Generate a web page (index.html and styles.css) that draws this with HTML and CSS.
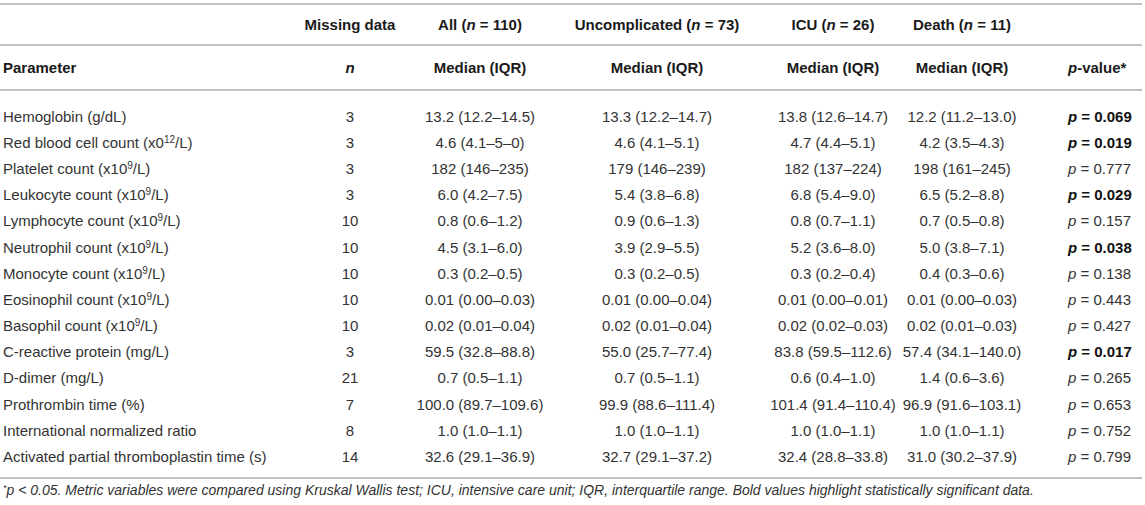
FILE: index.html
```html
<!DOCTYPE html>
<html>
<head>
<meta charset="utf-8">
<link rel="stylesheet" href="styles.css">
</head>
<body>
<div class="wrap">
<table class="data">
  <colgroup>
    <col class="c1"><col class="c2"><col class="c3"><col class="c4"><col class="c5"><col class="c6"><col class="c7">
  </colgroup>
  <thead>
    <tr class="h1">
      <th class="left"></th>
      <th>Missing data</th>
      <th>All (<i>n</i> = 110)</th>
      <th>Uncomplicated (<i>n</i> = 73)</th>
      <th>ICU (<i>n</i> = 26)</th>
      <th>Death (<i>n</i> = 11)</th>
      <th class="pv"></th>
    </tr>
    <tr class="h2">
      <th class="left">Parameter</th>
      <th><i>n</i></th>
      <th>Median (IQR)</th>
      <th>Median (IQR)</th>
      <th>Median (IQR)</th>
      <th>Median (IQR)</th>
      <th class="pv"><i>p</i>-value*</th>
    </tr>
  </thead>
  <tbody>
    <tr class="first"><td class="left">Hemoglobin (g/dL)</td><td>3</td><td>13.2 (12.2–14.5)</td><td>13.3 (12.2–14.7)</td><td>13.8 (12.6–14.7)</td><td>12.2 (11.2–13.0)</td><td class="pv"><b><i>p</i> = 0.069</b></td></tr>
    <tr><td class="left">Red blood cell count (x0<sup>12</sup>/L)</td><td>3</td><td>4.6 (4.1–5–0)</td><td>4.6 (4.1–5.1)</td><td>4.7 (4.4–5.1)</td><td>4.2 (3.5–4.3)</td><td class="pv"><b><i>p</i> = 0.019</b></td></tr>
    <tr><td class="left">Platelet count (x10<sup>9</sup>/L)</td><td>3</td><td>182 (146–235)</td><td>179 (146–239)</td><td>182 (137–224)</td><td>198 (161–245)</td><td class="pv"><i>p</i> = 0.777</td></tr>
    <tr><td class="left">Leukocyte count (x10<sup>9</sup>/L)</td><td>3</td><td>6.0 (4.2–7.5)</td><td>5.4 (3.8–6.8)</td><td>6.8 (5.4–9.0)</td><td>6.5 (5.2–8.8)</td><td class="pv"><b><i>p</i> = 0.029</b></td></tr>
    <tr><td class="left">Lymphocyte count (x10<sup>9</sup>/L)</td><td>10</td><td>0.8 (0.6–1.2)</td><td>0.9 (0.6–1.3)</td><td>0.8 (0.7–1.1)</td><td>0.7 (0.5–0.8)</td><td class="pv"><i>p</i> = 0.157</td></tr>
    <tr><td class="left">Neutrophil count (x10<sup>9</sup>/L)</td><td>10</td><td>4.5 (3.1–6.0)</td><td>3.9 (2.9–5.5)</td><td>5.2 (3.6–8.0)</td><td>5.0 (3.8–7.1)</td><td class="pv"><b><i>p</i> = 0.038</b></td></tr>
    <tr><td class="left">Monocyte count (x10<sup>9</sup>/L)</td><td>10</td><td>0.3 (0.2–0.5)</td><td>0.3 (0.2–0.5)</td><td>0.3 (0.2–0.4)</td><td>0.4 (0.3–0.6)</td><td class="pv"><i>p</i> = 0.138</td></tr>
    <tr><td class="left">Eosinophil count (x10<sup>9</sup>/L)</td><td>10</td><td>0.01 (0.00–0.03)</td><td>0.01 (0.00–0.04)</td><td>0.01 (0.00–0.01)</td><td>0.01 (0.00–0.03)</td><td class="pv"><i>p</i> = 0.443</td></tr>
    <tr><td class="left">Basophil count (x10<sup>9</sup>/L)</td><td>10</td><td>0.02 (0.01–0.04)</td><td>0.02 (0.01–0.04)</td><td>0.02 (0.02–0.03)</td><td>0.02 (0.01–0.03)</td><td class="pv"><i>p</i> = 0.427</td></tr>
    <tr><td class="left">C-reactive protein (mg/L)</td><td>3</td><td>59.5 (32.8–88.8)</td><td>55.0 (25.7–77.4)</td><td>83.8 (59.5–112.6)</td><td>57.4 (34.1–140.0)</td><td class="pv"><b><i>p</i> = 0.017</b></td></tr>
    <tr><td class="left">D-dimer (mg/L)</td><td>21</td><td>0.7 (0.5–1.1)</td><td>0.7 (0.5–1.1)</td><td>0.6 (0.4–1.0)</td><td>1.4 (0.6–3.6)</td><td class="pv"><i>p</i> = 0.265</td></tr>
    <tr><td class="left">Prothrombin time (%)</td><td>7</td><td>100.0 (89.7–109.6)</td><td>99.9 (88.6–111.4)</td><td>101.4 (91.4–110.4)</td><td>96.9 (91.6–103.1)</td><td class="pv"><i>p</i> = 0.653</td></tr>
    <tr><td class="left">International normalized ratio</td><td>8</td><td>1.0 (1.0–1.1)</td><td>1.0 (1.0–1.1)</td><td>1.0 (1.0–1.1)</td><td>1.0 (1.0–1.1)</td><td class="pv"><i>p</i> = 0.752</td></tr>
    <tr class="last"><td class="left">Activated partial thromboplastin time (s)</td><td>14</td><td>32.6 (29.1–36.9)</td><td>32.7 (29.1–37.2)</td><td>32.4 (28.8–33.8)</td><td>31.0 (30.2–37.9)</td><td class="pv"><i>p</i> = 0.799</td></tr>
  </tbody>
</table>
<p class="note"><sup>*</sup>p &lt; 0.05. Metric variables were compared using Kruskal Wallis test; ICU, intensive care unit; IQR, interquartile range. Bold values highlight statistically significant data.</p>
</div>
</body>
</html>
```
FILE: styles.css
```css
html, body {
  margin: 0;
  padding: 0;
  background: #fff;
}
body {
  font-family: "Liberation Sans", Arial, sans-serif;
  color: #333;
}
.wrap {
  padding-top: 3px;
  width: 1142px;
}
.data {
  width: 1142px;
  border-collapse: collapse;
  table-layout: fixed;
  font-size: 15px;
  border-top: 2px solid #c2c2c2;
  border-bottom: 2px solid #c2c2c2;
}
.c1 { width: 290px; }
.c2 { width: 120px; }
.c3 { width: 140px; }
.c4 { width: 214px; }
.c5 { width: 138px; }
.c6 { width: 120px; }
.c7 { width: 120px; }
th, td {
  padding: 0;
  text-align: center;
  vertical-align: middle;
  white-space: nowrap;
}
th {
  font-weight: bold;
  color: #1a1a1a;
}
.left {
  text-align: left;
  padding-left: 3px;
}
.pv {
  text-align: left;
  padding-left: 46px;
}
.h1 th {
  height: 39px;
  border-bottom: 2px solid #c2c2c2;
}
.h2 th {
  height: 43px;
  border-bottom: 2px solid #c2c2c2;
}
tbody td {
  height: 26.2px;
}
tbody tr.first td {
  padding-top: 12px;
}
tbody tr.last td {
  padding-bottom: 7px;
}
td b {
  color: #111;
}
sup {
  font-size: 10px;
  vertical-align: 5px;
  line-height: 0;
}
.note {
  margin: 3px 0 0 0;
  padding-left: 3px;
  font-size: 14px;
  font-style: italic;
  color: #333;
}
.note sup {
  font-size: 9px;
  vertical-align: 4px;
}
```
